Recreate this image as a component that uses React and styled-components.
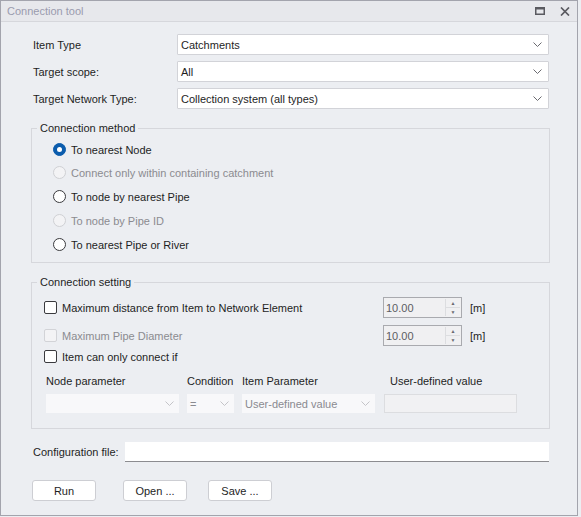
import styled, { createGlobalStyle } from "styled-components";

const GlobalStyle = createGlobalStyle`
  html, body {
    margin: 0;
    padding: 0;
    background: #eceef2;
  }
  * { box-sizing: border-box; }
`;

const Chevron = ({ light }) => (
  <svg width="9" height="5" viewBox="0 0 9 5">
    <path d="M0.5 0.5 L4.5 4.5 L8.5 0.5" fill="none" stroke={light ? "#c4c4c8" : "#6a6a70"} strokeWidth="1" />
  </svg>
);

export default function App() {
  return (
    <Window>
      <GlobalStyle />
      <TitleBar>
        <Title>Connection tool</Title>
        <TitleIcons>
          <svg width="10" height="8" viewBox="0 0 10 8">
            <rect x="0.75" y="1" width="8.5" height="6.25" fill="none" stroke="#5a5a60" strokeWidth="1.5" />
            <rect x="0" y="0" width="10" height="2.5" fill="#5a5a60" />
          </svg>
          <svg width="10" height="9" viewBox="0 0 10 9">
            <path d="M1 0.5 L9 8.5 M9 0.5 L1 8.5" stroke="#5a5a60" strokeWidth="1.7" />
          </svg>
        </TitleIcons>
      </TitleBar>

      <Body>
        <FormGrid>
          <Label>Item Type</Label>
          <Select><span>Catchments</span><Chevron /></Select>
          <Label>Target scope:</Label>
          <Select><span>All</span><Chevron /></Select>
          <Label>Target Network Type:</Label>
          <Select><span>Collection system (all types)</span><Chevron /></Select>
        </FormGrid>

        <Group>
          <Legend>Connection method</Legend>
          <RadioList>
            <RadioRow><Radio $checked /><Label>To nearest Node</Label></RadioRow>
            <RadioRow><Radio $disabled /><Label $disabled>Connect only within containing catchment</Label></RadioRow>
            <RadioRow $tall><Radio /><Label>To node by nearest Pipe</Label></RadioRow>
            <RadioRow><Radio $disabled /><Label $disabled>To node by Pipe ID</Label></RadioRow>
            <RadioRow $tall><Radio /><Label>To nearest Pipe or River</Label></RadioRow>
          </RadioList>
        </Group>

        <Group $setting>
          <Legend>Connection setting</Legend>
          <SettingBody>
            <SettingRow>
              <CheckLabel>
                <Check />
                <Label>Maximum distance from Item to Network Element</Label>
              </CheckLabel>
              <Spin>
                <SpinValue>10.00</SpinValue>
                <SpinButtons><span>▲</span><span>▼</span></SpinButtons>
              </Spin>
              <Unit>[m]</Unit>
            </SettingRow>
            <SettingRow $second>
              <CheckLabel>
                <Check $disabled />
                <Label $disabled>Maximum Pipe Diameter</Label>
              </CheckLabel>
              <Spin>
                <SpinValue>10.00</SpinValue>
                <SpinButtons><span>▲</span><span>▼</span></SpinButtons>
              </Spin>
              <Unit>[m]</Unit>
            </SettingRow>
            <CheckLabel $third>
              <Check />
              <Label>Item can only connect if</Label>
            </CheckLabel>

            <CondGrid>
              <Label>Node parameter</Label>
              <Label>Condition</Label>
              <Label>Item Parameter</Label>
              <Label $pad>User-defined value</Label>
              <FlatSelect><span></span><Chevron light /></FlatSelect>
              <FlatSelect><span>=</span><Chevron light /></FlatSelect>
              <FlatSelect><span>User-defined value</span><Chevron light /></FlatSelect>
              <ValueBox />
            </CondGrid>
          </SettingBody>
        </Group>

        <ConfigRow>
          <Label>Configuration file:</Label>
          <ConfigInput />
        </ConfigRow>

        <Buttons>
          <Button>Run</Button>
          <Button>Open ...</Button>
          <Button>Save ...</Button>
        </Buttons>
      </Body>
    </Window>
  );
}

const Window = styled.div`
  width: 578px;
  height: 516px;
  border: 1px solid #a3a4ad;
  background: #eceef2;
  font-family: "Liberation Sans", Arial, sans-serif;
  font-size: 11px;
  color: #1e1e1e;
  display: flex;
  flex-direction: column;
`;

const TitleBar = styled.div`
  height: 21px;
  background: #e7e8ec;
  border-bottom: 1px solid #d6d7dc;
  display: flex;
  align-items: center;
  justify-content: space-between;
  padding: 0 7px 0 6px;
`;

const Title = styled.div`
  color: #9a9bae;
  font-size: 11px;
`;

const TitleIcons = styled.div`
  display: flex;
  align-items: center;
  gap: 15px;
  svg { display: block; }
`;

const Body = styled.div`
  padding: 12px 27px 0 30px;
  display: flex;
  flex-direction: column;
`;

const FormGrid = styled.div`
  display: grid;
  grid-template-columns: 144px 1fr;
  row-gap: 6px;
  align-items: center;
  padding: 0 1px 0 2px;
`;

const Label = styled.span`
  color: ${(p) => (p.$disabled ? "#8b8b90" : "#1e1e1e")};
  white-space: nowrap;
  padding-left: ${(p) => (p.$pad ? "7px" : "0")};
`;

const Select = styled.div`
  height: 21px;
  background: #ffffff;
  border: 1px solid #d2d3d8;
  border-radius: 1px;
  display: flex;
  align-items: center;
  justify-content: space-between;
  padding: 0 6px 0 3px;
  svg { display: block; }
`;

const Group = styled.fieldset`
  margin: 13px 0 0;
  padding: ${(p) => (p.$setting ? "0 0 15px 0" : "4px 0 5px 0")};
  border: 1px solid #d6d7dc;
  min-width: 0;
`;

const Legend = styled.legend`
  margin-left: 5px;
  padding: 0 3px;
  color: #1e1e1e;
`;

const RadioList = styled.div`
  display: flex;
  flex-direction: column;
  padding-left: 21px;
`;

const RadioRow = styled.div`
  height: ${(p) => (p.$tall ? "25px" : "23px")};
  display: flex;
  align-items: center;
  gap: 5px;
`;

const Radio = styled.span`
  width: 13px;
  height: 13px;
  border-radius: 50%;
  flex: none;
  background: ${(p) => (p.$checked ? "#0b5cad" : p.$disabled ? "#f3f3f5" : "#ffffff")};
  border: 1px solid ${(p) => (p.$checked ? "#0b5cad" : p.$disabled ? "#cfd0d4" : "#3a3a3e")};
  display: flex;
  align-items: center;
  justify-content: center;
  &::after {
    content: "";
    display: ${(p) => (p.$checked ? "block" : "none")};
    width: 5px;
    height: 5px;
    border-radius: 50%;
    background: #ffffff;
  }
`;

const SettingBody = styled.div`
  padding: 9px 12px 0 12px;
  display: flex;
  flex-direction: column;
`;

const SettingRow = styled.div`
  display: flex;
  align-items: center;
  height: 21px;
  margin-top: ${(p) => (p.$second ? "7px" : "0")};
`;

const CheckLabel = styled.label`
  display: flex;
  align-items: center;
  gap: 5px;
  width: 339px;
  height: ${(p) => (p.$third ? "21px" : "auto")};
`;

const Check = styled.span`
  width: 13px;
  height: 13px;
  flex: none;
  border-radius: 2px;
  background: ${(p) => (p.$disabled ? "#f3f3f5" : "#ffffff")};
  border: 1px solid ${(p) => (p.$disabled ? "#d2d3d7" : "#3a3a3e")};
`;

const Spin = styled.div`
  width: 79px;
  height: 21px;
  border: 1px solid #a9aaaf;
  background: #f0f0f2;
  display: flex;
  align-items: center;
  justify-content: space-between;
  padding: 0 1px 0 2px;
`;

const SpinValue = styled.span`
  color: #5c5c62;
`;

const SpinButtons = styled.div`
  width: 15px;
  height: 17px;
  display: flex;
  flex-direction: column;
  border-left: 1px solid #dcdde0;
  span {
    flex: 1;
    font-size: 5px;
    line-height: 8px;
    text-align: center;
    color: #6a6a70;
  }
  span + span { border-top: 1px solid #dcdde0; }
`;

const Unit = styled.span`
  margin-left: 8px;
`;

const CondGrid = styled.div`
  display: grid;
  grid-template-columns: 133px 47px 133px 134px;
  column-gap: 8px;
  row-gap: 7px;
  align-items: center;
  padding-left: 2px;
  margin-top: 8px;
`;

const FlatSelect = styled.div`
  height: 19px;
  background: #f8f8fa;
  display: flex;
  align-items: center;
  justify-content: space-between;
  padding: 0 5px 0 3px;
  color: #8a8a90;
  svg { display: block; }
`;

const ValueBox = styled.div`
  height: 19px;
  margin-left: 1px;
  background: #f1f1f3;
  border: 1px solid #dcdde0;
`;

const ConfigRow = styled.div`
  display: flex;
  align-items: center;
  gap: 6px;
  padding: 0 1px 0 2px;
  margin-top: 13px;
`;

const ConfigInput = styled.div`
  flex: 1;
  height: 20px;
  background: #ffffff;
  border-bottom: 1px solid #8c8c90;
`;

const Buttons = styled.div`
  display: flex;
  gap: 27px;
  margin-top: 18px;
  padding-left: 1px;
  & > :nth-child(3) { margin-left: -6px; }
`;

const Button = styled.button`
  width: 64px;
  height: 21px;
  background: #ffffff;
  border: 1px solid #cdced3;
  border-radius: 3px;
  font-family: inherit;
  font-size: 11px;
  color: #1e1e1e;
  padding: 0;
`;
